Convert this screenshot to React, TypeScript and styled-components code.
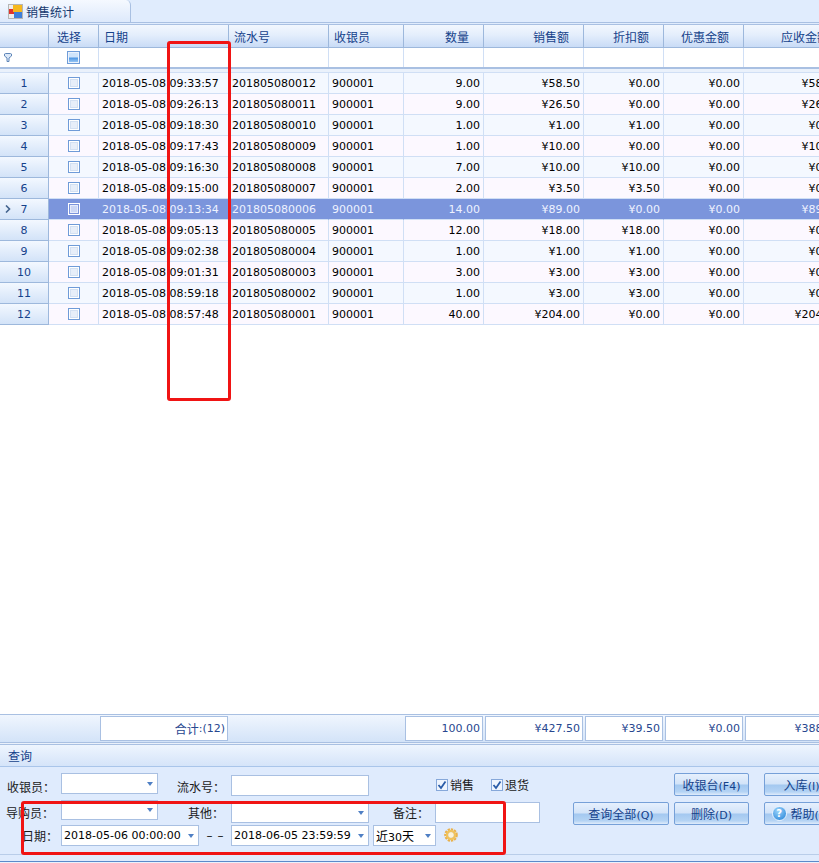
import React from "react";
import styled, { createGlobalStyle } from "styled-components";

const Global = createGlobalStyle`
  html, body { margin: 0; padding: 0; background: #fff; }
  body { font-family: "Noto Sans CJK SC", "Noto Sans", sans-serif; font-size: 12px; }
`;

const COLS = "49px 50px 130px 100px 75px 80px 100px 80px 80px 100px";
const LATIN = `"DejaVu Sans", "Noto Sans CJK SC", sans-serif`;

const Page = styled.div`
  position: relative;
  width: 819px;
  height: 863px;
  padding-bottom: 1px;
  box-sizing: border-box;
  overflow: hidden;
  display: flex;
  flex-direction: column;
  background: #eaf1fb;
`;
const Num = styled.span`
  font-family: ${LATIN};
  font-size: 11px;
`;
const TabBar = styled.div`
  height: 22px;
  background: #e0ecfd;
  border-bottom: 3px double #a9c0e2;
  flex: none;
`;
const Tab = styled.div`
  width: 131px;
  height: 22px;
  box-sizing: border-box;
  display: flex;
  align-items: center;
  gap: 3px;
  padding-left: 8px;
  background: linear-gradient(#f5f9ff, #dde9fb);
  border-right: 1px solid #a9c0e2;
  border-top-right-radius: 5px;
  color: #15396f;
  font-size: 12px;
`;
const HeaderRow = styled.div`
  display: grid;
  grid-template-columns: ${COLS};
  height: 23px;
  flex: none;
`;
const HeadCell = styled.div<{ $right?: boolean; $pl?: number }>`
  box-sizing: border-box;
  display: flex;
  align-items: center;
  justify-content: ${(p) => (p.$right ? "flex-end" : "flex-start")};
  padding: 1px ${(p) => (p.$right ? 14 : 4)}px 0 ${(p) => p.$pl ?? 4}px;
  background: linear-gradient(#f2f7fe, #e4eefc 45%, #c9dcf6);
  border-right: 1px solid #9db8dc;
  border-bottom: 1px solid #9db8dc;
  color: #15428b;
  font-size: 12px;
  white-space: nowrap;
`;
const FilterRow = styled.div`
  display: grid;
  grid-template-columns: ${COLS};
  height: 19px;
  flex: none;
`;
const FilterCell = styled.div<{ $left?: boolean }>`
  box-sizing: border-box;
  display: flex;
  align-items: center;
  justify-content: ${(p) => (p.$left ? "flex-start" : "center")};
  padding-left: ${(p) => (p.$left ? 4 : 0)}px;
  background: #fff;
  border-right: 1px solid #d0dff5;
`;
const Divider = styled.div`
  height: 6px;
  flex: none;
  box-sizing: border-box;
  background: #eaf1fb;
  border-top: 2px solid #a9c0e2;
  border-bottom: 1px solid #d0dff5;
`;
const DataRow = styled.div`
  display: grid;
  grid-template-columns: ${COLS};
  height: 21px;
  flex: none;
`;
const RowHead = styled.div`
  position: relative;
  box-sizing: border-box;
  display: flex;
  align-items: center;
  justify-content: center;
  background: linear-gradient(#f3f8ff, #d3e3f8);
  border-right: 1px solid #9db8dc;
  border-bottom: 1px solid #9db8dc;
  color: #15428b;
  font-family: ${LATIN};
  font-size: 11px;
`;
const Pointer = styled.svg`
  position: absolute;
  left: 5px;
  top: 6px;
`;
const Cell = styled.div<{ $even: boolean; $sel: boolean; $right?: boolean; $center?: boolean }>`
  box-sizing: border-box;
  display: flex;
  align-items: center;
  justify-content: ${(p) => (p.$right ? "flex-end" : p.$center ? "center" : "flex-start")};
  padding: 0 3px;
  white-space: nowrap;
  overflow: hidden;
  background: ${(p) => (p.$sel ? "#7b95dc" : p.$even ? "#fcf8ff" : "#f4f8ff")};
  color: ${(p) => (p.$sel ? "#eef2ff" : "#000")};
  border-right: 1px solid ${(p) => (p.$sel ? "#7b95dc" : "#d0dff5")};
  border-bottom: 1px solid #d0dff5;
  font-family: ${LATIN};
  font-size: 11px;
`;
const Check = styled.span<{ $sel?: boolean }>`
  display: inline-block;
  box-sizing: border-box;
  width: 12px;
  height: 12px;
  border: 1px solid ${(p) => (p.$sel ? "#fff" : "#6f9bd8")};
  background: ${(p) => (p.$sel ? "#7b95dc" : "#fff")};
  position: relative;
  &::after {
    content: "";
    position: absolute;
    inset: 1px;
    box-sizing: border-box;
    background: ${(p) => (p.$sel ? "#ccd8f5" : "#e7eef9")};
    border: 1px solid ${(p) => (p.$sel ? "#e6ecfb" : "#d3e0f2")};
  }
`;
const FilterCheck = styled.span`
  display: inline-block;
  box-sizing: border-box;
  width: 13px;
  height: 13px;
  border: 1px solid #6f9cd8;
  background: linear-gradient(#cfe4fb 0 45%, #4e97e4 55%, #a9d0f7);
  box-shadow: inset 0 0 0 1px #eaf2fd;
`;
const Blank = styled.div`
  flex: 1;
  background: #fff;
`;
const SumBar = styled.div`
  display: grid;
  grid-template-columns: ${COLS};
  height: 29px;
  box-sizing: border-box;
  flex: none;
  background: linear-gradient(#f0f6fe, #d3e3f8);
  border-top: 1px solid #a9c0e2;
  border-bottom: 1px solid #a9c0e2;
`;
const SumBox = styled.div`
  box-sizing: border-box;
  margin: 1px 0 1px 1px;
  width: calc(100% - 2px);
  display: flex;
  align-items: center;
  justify-content: flex-end;
  padding-right: 2px;
  background: #fff;
  border: 1px solid #a9c0e2;
  color: #27478f;
  font-family: ${LATIN};
  font-size: 11px;
  white-space: nowrap;
  overflow: hidden;
`;
const Cjk = styled.span`
  font-family: "Noto Sans CJK SC", sans-serif;
  font-size: 12px;
`;
const Group = styled.div`
  flex: none;
  margin-top: 1px;
  background: #dfebfd;
  border-top: 1px solid #a9c0e2;
  border-bottom: 1px solid #5b8ac9;
  height: 118px;
  box-sizing: border-box;
  overflow: hidden;
`;
const GroupTitle = styled.div`
  height: 22px;
  box-sizing: border-box;
  padding-left: 8px;
  display: flex;
  align-items: center;
  background: linear-gradient(#eef5fe, #d5e4f9);
  border-bottom: 1px solid #a9c5ea;
  color: #15428b;
  font-size: 12px;
`;
const Form = styled.div`
  padding-top: 6px;
  height: 88px;
  box-sizing: border-box;
  border-bottom: 1px solid #b9cde9;
`;
const FormRow = styled.div<{ $h: number }>`
  display: flex;
  width: 900px;
  height: ${(p) => p.$h}px;
`;
const Label = styled.label<{ $w: number; $pl: number }>`
  width: ${(p) => p.$w}px;
  padding-left: ${(p) => p.$pl}px;
  box-sizing: border-box;
  flex: none;
  display: flex;
  align-items: center;
  color: #1a1a1a;
  font-size: 12px;
  white-space: nowrap;
`;
const Field = styled.div<{ $w: number; $h?: number; $top?: number; $ml?: number }>`
  width: ${(p) => p.$w}px;
  height: ${(p) => p.$h ?? 21}px;
  margin-top: ${(p) => p.$top ?? 0}px;
  margin-left: ${(p) => p.$ml ?? 0}px;
  flex: none;
  box-sizing: border-box;
  display: flex;
  align-items: center;
  justify-content: space-between;
  padding: 0 4px 0 2px;
  background: #fff;
  border: 1px solid #a9c0e2;
  color: #000;
  font-family: ${LATIN};
  font-size: 11px;
  white-space: nowrap;
`;
const Arrow = styled.span`
  width: 0;
  height: 0;
  border-left: 3px solid transparent;
  border-right: 3px solid transparent;
  border-top: 4px solid #4f7fc4;
  flex: none;
`;
const CheckItem = styled.label<{ $ml: number }>`
  margin-left: ${(p) => p.$ml}px;
  flex: none;
  display: flex;
  align-items: center;
  gap: 2px;
  height: 23px;
  font-size: 12px;
  color: #1a1a1a;
`;
const Tick = styled.span`
  width: 12px;
  height: 12px;
  box-sizing: border-box;
  border: 1px solid #86a8da;
  background: #eef4fd;
  display: flex;
  align-items: center;
  justify-content: center;
`;
const Button = styled.button<{ $w: number; $ml: number; $top?: number }>`
  width: ${(p) => p.$w}px;
  height: 23px;
  margin-left: ${(p) => p.$ml}px;
  margin-top: ${(p) => p.$top ?? 0}px;
  flex: none;
  padding: 0;
  box-sizing: border-box;
  display: flex;
  align-items: center;
  justify-content: center;
  gap: 4px;
  font-family: inherit;
  font-size: 12px;
  color: #15428b;
  border: 1px solid #76a0d8;
  border-radius: 2px;
  background: linear-gradient(#e6f0fd, #d2e3f8 48%, #a3c8f0 52%, #b4d3f4 85%, #e0ecfb);
  white-space: nowrap;
`;
const Dash = styled.span`
  width: 32px;
  flex: none;
  display: flex;
  align-items: center;
  justify-content: center;
  gap: 5px;
  height: 21px;
  color: #222;
  font-family: ${LATIN};
  font-size: 12px;
`;
const HelpIcon = styled.span`
  width: 15px;
  height: 15px;
  border-radius: 50%;
  background: radial-gradient(circle at 40% 30%, #9bd4fb, #1f7fd6);
  border: 1px solid #e8f3ff;
  box-sizing: border-box;
  color: #fff;
  font-family: ${LATIN};
  font-size: 10px;
  font-weight: 700;
  line-height: 13px;
  text-align: center;
`;
const RedBox = styled.div<{ $x: number; $y: number; $w: number; $h: number }>`
  position: absolute;
  left: ${(p) => p.$x}px;
  top: ${(p) => p.$y}px;
  width: ${(p) => p.$w}px;
  height: ${(p) => p.$h}px;
  box-sizing: border-box;
  border: 3px solid #f01414;
  border-radius: 3px;
  pointer-events: none;
`;

const rows = [
  ["09:33:57", "201805080012", "9.00", "¥58.50", "¥0.00", "¥58.50"],
  ["09:26:13", "201805080011", "9.00", "¥26.50", "¥0.00", "¥26.50"],
  ["09:18:30", "201805080010", "1.00", "¥1.00", "¥1.00", "¥0.00"],
  ["09:17:43", "201805080009", "1.00", "¥10.00", "¥0.00", "¥10.00"],
  ["09:16:30", "201805080008", "7.00", "¥10.00", "¥10.00", "¥0.00"],
  ["09:15:00", "201805080007", "2.00", "¥3.50", "¥3.50", "¥0.00"],
  ["09:13:34", "201805080006", "14.00", "¥89.00", "¥0.00", "¥89.00"],
  ["09:05:13", "201805080005", "12.00", "¥18.00", "¥18.00", "¥0.00"],
  ["09:02:38", "201805080004", "1.00", "¥1.00", "¥1.00", "¥0.00"],
  ["09:01:31", "201805080003", "3.00", "¥3.00", "¥3.00", "¥0.00"],
  ["08:59:18", "201805080002", "1.00", "¥3.00", "¥3.00", "¥0.00"],
  ["08:57:48", "201805080001", "40.00", "¥204.00", "¥0.00", "¥204.00"],
];

const TabIcon = () => (
  <svg width="15" height="15" viewBox="0 0 15 15">
    <rect x="0.5" y="0.5" width="14" height="14" fill="#eee" stroke="#b5b5b5" />
    <rect x="1" y="5" width="5" height="5" fill="#e0352b" />
    <rect x="5" y="1" width="9" height="7" fill="#f5b81f" />
    <rect x="6" y="8" width="8" height="6" fill="#3f7fd8" />
  </svg>
);

const FunnelIcon = () => (
  <svg width="8" height="9" viewBox="0 0 8 9">
    <path d="M0.5 1L1.5 0.5H6.5L7.5 1V3L5 5V8.5H3V5L0.5 3Z" fill="#dbe8f8" stroke="#5f86b8" strokeWidth="1" />
  </svg>
);

const TickIcon = () => (
  <svg width="10" height="10" viewBox="0 0 10 10">
    <path d="M1.5 5L4 8L8.5 1.5" fill="none" stroke="#2a5ca8" strokeWidth="1.8" />
  </svg>
);

const GearIcon = () => (
  <svg width="14" height="14" viewBox="0 0 14 14" style={{ marginLeft: 8, marginTop: 3, flex: "none" }}>
    <circle cx="7" cy="7" r="5.6" fill="none" stroke="#e9b04a" strokeWidth="2.4" strokeDasharray="2.2 1" />
    <circle cx="7" cy="7" r="4" fill="none" stroke="#f0c25c" strokeWidth="2.6" />
    <circle cx="7" cy="7" r="2.4" fill="#fdf3d6" />
  </svg>
);

export default function App() {
  return (
    <Page>
      <Global />
      <TabBar>
        <Tab>
          <TabIcon />
          <span>销售统计</span>
        </Tab>
      </TabBar>
      <HeaderRow>
        <HeadCell />
        <HeadCell $pl={8}>选择</HeadCell>
        <HeadCell $pl={5}>日期</HeadCell>
        <HeadCell $pl={5}>流水号</HeadCell>
        <HeadCell $pl={5}>收银员</HeadCell>
        <HeadCell $right>数量</HeadCell>
        <HeadCell $right>销售额</HeadCell>
        <HeadCell $right>折扣额</HeadCell>
        <HeadCell $right>优惠金额</HeadCell>
        <HeadCell $right>应收金额</HeadCell>
      </HeaderRow>
      <FilterRow>
        <FilterCell $left>
          <FunnelIcon />
        </FilterCell>
        <FilterCell>
          <FilterCheck />
        </FilterCell>
        {Array.from({ length: 8 }).map((_, i) => (
          <FilterCell key={i} />
        ))}
      </FilterRow>
      <Divider />
      {rows.map((r, i) => {
        const even = i % 2 === 1;
        const sel = i === 6;
        const p = { $even: even, $sel: sel };
        return (
          <DataRow key={i}>
            <RowHead>
              {sel && (
                <Pointer width="6" height="8" viewBox="0 0 6 8">
                  <path d="M1 0.5L4.5 4L1 7.5" fill="none" stroke="#44648f" strokeWidth="1.6" />
                </Pointer>
              )}
              {i + 1}
            </RowHead>
            <Cell {...p} $center>
              <Check $sel={sel} />
            </Cell>
            <Cell {...p}>2018-05-08 {r[0]}</Cell>
            <Cell {...p}>{r[1]}</Cell>
            <Cell {...p}>900001</Cell>
            <Cell {...p} $right>
              {r[2]}
            </Cell>
            <Cell {...p} $right>
              {r[3]}
            </Cell>
            <Cell {...p} $right>
              {r[4]}
            </Cell>
            <Cell {...p} $right>
              ¥0.00
            </Cell>
            <Cell {...p} $right>
              {r[5]}
            </Cell>
          </DataRow>
        );
      })}
      <Blank />
      <SumBar>
        <span />
        <span />
        <SumBox>
          <Cjk>合计</Cjk>:(12)
        </SumBox>
        <span />
        <span />
        <SumBox>100.00</SumBox>
        <SumBox>¥427.50</SumBox>
        <SumBox>¥39.50</SumBox>
        <SumBox>¥0.00</SumBox>
        <SumBox>¥388.00</SumBox>
      </SumBar>
      <Group>
        <GroupTitle>查询</GroupTitle>
        <Form>
          <FormRow $h={27}>
            <Label $w={61} $pl={7}>收银员：</Label>
            <Field $w={97}>
              <span />
              <Arrow />
            </Field>
            <Label $w={73} $pl={19}>流水号：</Label>
            <Field $w={138} $top={2} />
            <CheckItem $ml={67}>
              <Tick>
                <TickIcon />
              </Tick>
              销售
            </CheckItem>
            <CheckItem $ml={17}>
              <Tick>
                <TickIcon />
              </Tick>
              退货
            </CheckItem>
            <Button $w={75} $ml={145}>
              <span>收银台<Num>(F4)</Num></span>
            </Button>
            <Button $w={75} $ml={15}>
              <span>入库<Num>(I)</Num></span>
            </Button>
          </FormRow>
          <FormRow $h={25}>
            <Label $w={61} $pl={6}>导购员：</Label>
            <Field $w={97} $h={20}>
              <span />
              <Arrow />
            </Field>
            <Label $w={73} $pl={30}>其他：</Label>
            <Field $w={138} $top={2}>
              <span />
              <Arrow />
            </Field>
            <Label $w={66} $pl={24}>备注：</Label>
            <Field $w={105} $top={2} />
            <Button $w={96} $ml={33} $top={2}>
              <span>查询全部<Num>(Q)</Num></span>
            </Button>
            <Button $w={75} $ml={5} $top={2}>
              <span>删除<Num>(D)</Num></span>
            </Button>
            <Button $w={75} $ml={15} $top={2}>
              <HelpIcon>?</HelpIcon>
              <span>帮助<Num>(H)</Num></span>
            </Button>
          </FormRow>
          <FormRow $h={21}>
            <Label $w={61} $pl={22}>日期：</Label>
            <Field $w={138}>
              2018-05-06 00:00:00
              <Arrow />
            </Field>
            <Dash>
              <span>–</span>
              <span>–</span>
            </Dash>
            <Field $w={138}>
              2018-06-05 23:59:59
              <Arrow />
            </Field>
            <Field $w={63} $ml={4}>
              <span><Cjk>近</Cjk>30<Cjk>天</Cjk></span>
              <Arrow />
            </Field>
            <GearIcon />
          </FormRow>
        </Form>
      </Group>
      <RedBox $x={167} $y={41} $w={64} $h={360} />
      <RedBox $x={21} $y={801} $w={485} $h={54} />
    </Page>
  );
}
